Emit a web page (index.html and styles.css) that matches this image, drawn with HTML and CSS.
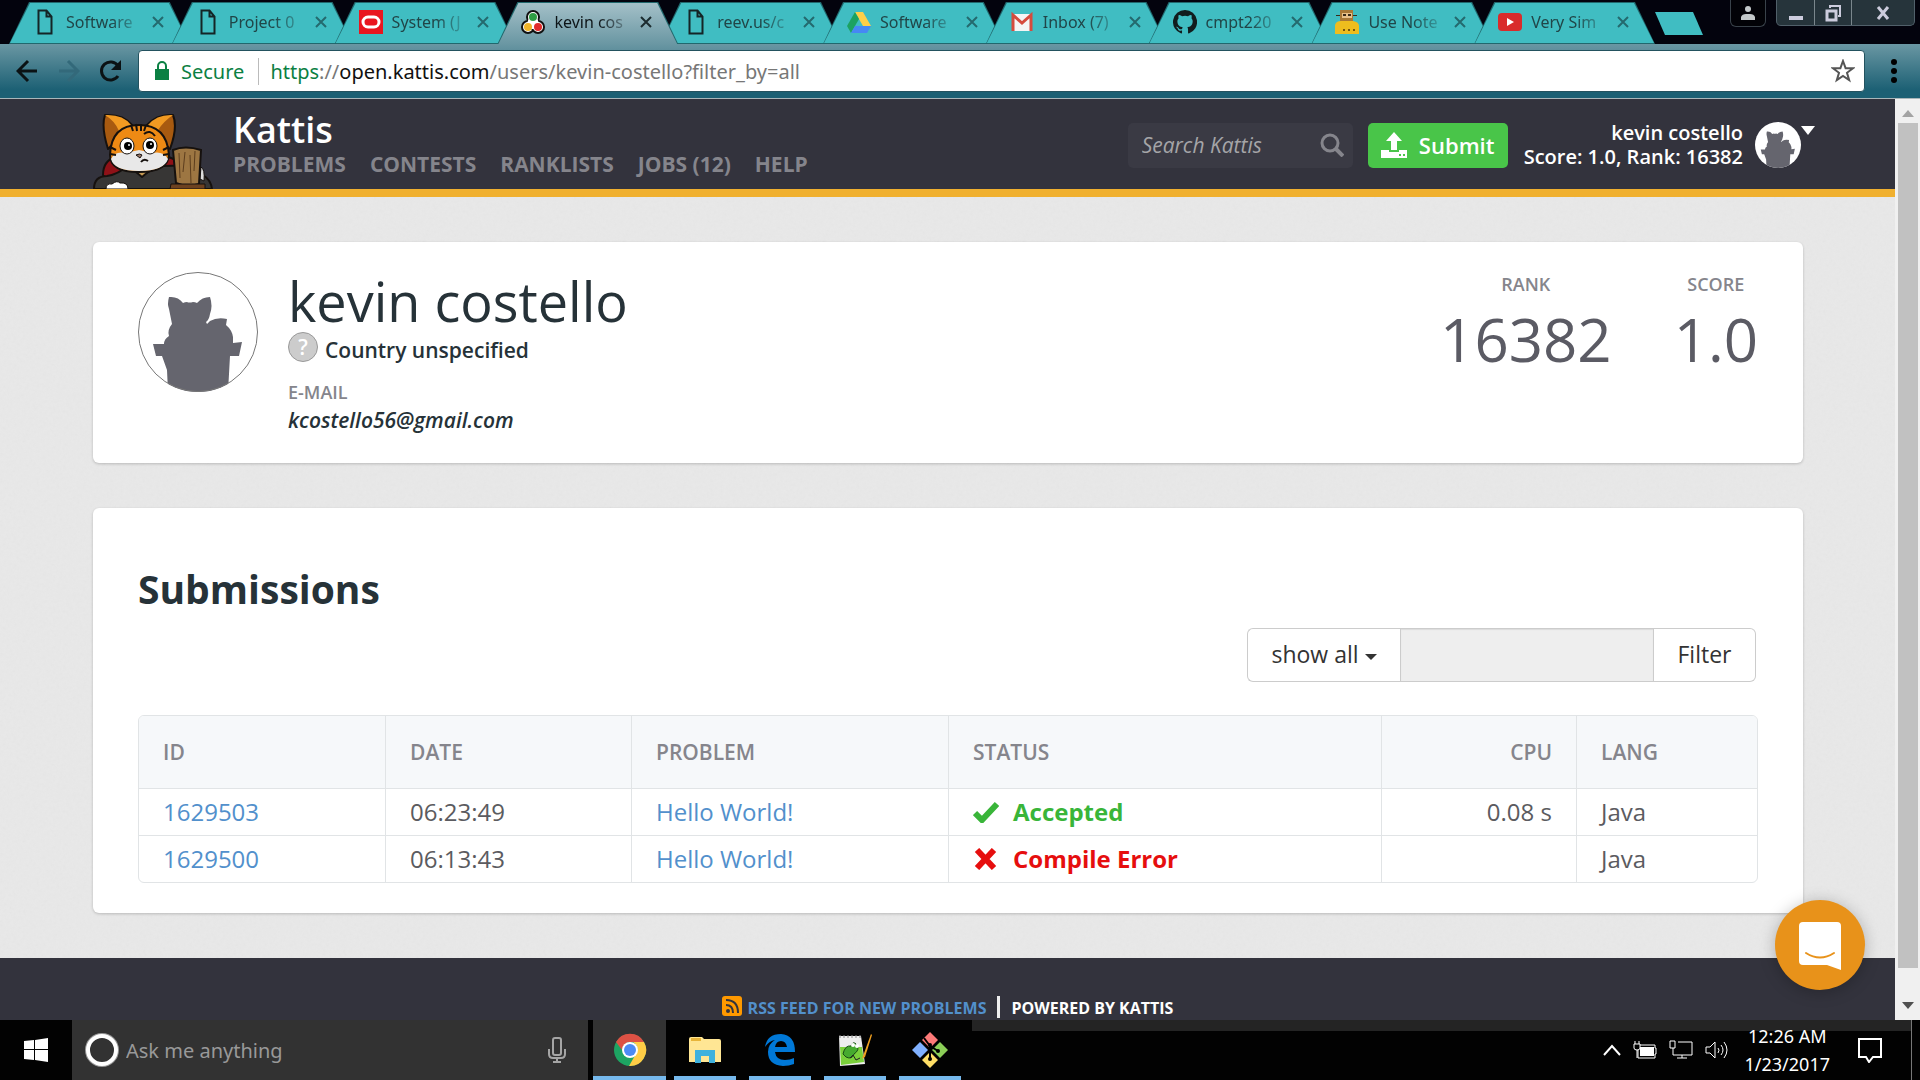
FILE: index.html
```html
<!DOCTYPE html>
<html lang="en">
<head>
<meta charset="utf-8">
<title>kevin costello – Kattis, Kattis</title>
<link rel="stylesheet" href="styles.css">
</head>
<body>
<svg class="defs" aria-hidden="true">
  <symbol id="page" viewBox="0 0 16 26"><path d="M1.500 1.500h8l5 6v17h-13zM9.500 1.500v6h5" fill="none" stroke="#142526" stroke-width="2"/></symbol>
  <symbol id="close" viewBox="0 0 12 12"><path d="M1 1l10 10M11 1L1 11" fill="none" stroke="currentColor" stroke-width="2"/></symbol>
  <symbol id="cat" viewBox="0 0 120 120"><clipPath id="disc"><circle cx="60" cy="60" r="60"/></clipPath><path clip-path="url(#disc)" d="M31 25q9-1 14 6 2-1 4-1 2 1 6 0 2 0 4 1 5-6 13-6 3 9 0 17-1 6-4 8l1 2 3-3q7-4 17-2l-1 6q6 5 7 12v6l9-1-3 14h-9l-2 36H30l-1-22-5-14h-6l-3-12h11q0-5 5-8-2-6 3-12l-3-15q-2-5 0-12z" fill="#65656e"/></symbol>
</svg>

<header class="browser">
  <div class="strip">
    <nav class="tabs">
      <a class="tab" href="#"><svg class="fav"><use href="#page"/></svg><span>Software</span><svg class="x"><use href="#close"/></svg></a>
      <a class="tab" href="#"><svg class="fav"><use href="#page"/></svg><span>Project 0</span><svg class="x"><use href="#close"/></svg></a>
      <a class="tab" href="#"><svg class="fav" viewBox="0 0 24 24"><path d="M0 0h24v24H0z" fill="#e9161f"/><rect x="4" y="7" width="16" height="10" rx="5" fill="none" stroke="#fff" stroke-width="3"/></svg><span>System (J</span><svg class="x"><use href="#close"/></svg></a>
      <a class="tab active" href="#"><svg class="fav" viewBox="0 0 24 24"><g fill="#fff" stroke="#111" stroke-width="2"><circle cx="12" cy="7" r="6"/><circle cx="7" cy="17" r="6"/><circle cx="17" cy="17" r="6"/></g><path d="M9 5h6l5 14H4z" fill="#fff"/><circle cx="12" cy="7" r="4" fill="#2f9e44"/><circle cx="7" cy="17" r="4" fill="#f0b429"/><circle cx="17" cy="17" r="4" fill="#e02b2b"/></svg><span>kevin cos</span><svg class="x"><use href="#close"/></svg></a>
      <a class="tab" href="#"><svg class="fav"><use href="#page"/></svg><span>reev.us/c</span><svg class="x"><use href="#close"/></svg></a>
      <a class="tab" href="#"><svg class="fav" viewBox="0 0 24 24"><path d="M8 2h8l8 14h-8z" fill="#ffcf48"/><path d="M8 2l4 7-8 14-4-7z" fill="#1ca261"/><path d="M8 16h16l-4 7H4z" fill="#4688f4"/></svg><span>Software</span><svg class="x"><use href="#close"/></svg></a>
      <a class="tab" href="#"><svg class="fav" viewBox="0 0 24 24"><path d="M2 4h20v17H2z" fill="#f5f5f5"/><path d="M3 21V5l9 8 9-8v16" fill="none" stroke="#d54b3d" stroke-width="3"/></svg><span>Inbox (7)</span><svg class="x"><use href="#close"/></svg></a>
      <a class="tab" href="#"><svg class="fav" viewBox="0 0 16 16"><path fill="#111d1e" d="M8 0a8 8 0 0 0-2.530 15.590c.4.070.55-.17.55-.38v-1.490c-2.010.37-2.530-.49-2.690-.94-.09-.23-.48-.94-.82-1.130-.28-.15-.68-.52-.01-.53.63-.01 1.080.58 1.230.82.720 1.210 1.870.87 2.330.66.070-.52.280-.87.510-1.070-1.780-.2-3.640-.89-3.640-3.950 0-.87.310-1.590.82-2.150-.08-.2-.36-1.020.08-2.120 0 0 .67-.21 2.200.82a7.600 7.600 0 0 1 4 0c1.530-1.040 2.200-.82 2.200-.82.440 1.100.160 1.920.08 2.120.51.560.82 1.270.82 2.150 0 3.070-1.870 3.750-3.650 3.950.29.250.54.730.54 1.480v2.200c0 .21.150.46.550.38A8 8 0 0 0 8 0z"/></svg><span>cmpt220</span><svg class="x"><use href="#close"/></svg></a>
      <a class="tab" href="#"><svg class="fav" viewBox="0 0 24 24"><path d="M5 0h13v11H5z" fill="#a87736"/><path d="M7 3h10v5H7z" fill="#e8c08a"/><path d="M8 4h3v2H8zM13 4h3v2h-3zM1 5h4v1H1zM18 5h4v1h-4z" fill="#3a2a18"/><path d="M0 24V15q1-4 6-4h12q6 1 6 5v8z" fill="#eebd1e"/><path d="M8 19h2v2H8zM13 19h2v2h-2zM18 19h2v2h-2z" fill="#76560d"/></svg><span>Use Note</span><svg class="x"><use href="#close"/></svg></a>
      <a class="tab" href="#"><svg class="fav" viewBox="0 0 24 24"><rect y="3" width="24" height="18" rx="4" fill="#d92b2b"/><path d="M9 8l7 4-7 4z" fill="#fff"/></svg><span>Very Sim</span><svg class="x"><use href="#close"/></svg></a>
    </nav>
    <button class="newtab" aria-label="New tab"></button>
    <div class="spacer"></div>
    <button class="profile" aria-label="Profile"><svg width="14" height="16" viewBox="0 0 14 16" fill="#c3c8ca"><circle cx="7" cy="4" r="3"/><path d="M0 15v-3q1-3 5-3h4q4 0 5 3v3z"/></svg></button>
    <div class="winbtns">
      <button aria-label="Minimize"><svg width="18" height="20" viewBox="0 0 18 20"><path d="M2 13h14v4H2z" fill="#ccd"/></svg></button>
      <button aria-label="Restore"><svg width="18" height="20" viewBox="0 0 18 20" fill="none" stroke="#ccd" stroke-width="2"><path d="M6 5V3h10v10h-2"/><path d="M3 8h9v9H3z" stroke-width="3"/></svg></button>
      <button class="wide" aria-label="Close"><svg width="16" height="18" viewBox="0 0 16 18"><path d="M3 3l10 12M13 3L3 15" stroke="#ccd" stroke-width="3"/></svg></button>
    </div>
  </div>
  <div class="toolbar">
    <button aria-label="Back"><svg width="22" height="26" viewBox="0 0 22 26"><path d="M21 13H2M12 3L2 13l10 10" fill="none" stroke="#0b1214" stroke-width="3"/></svg></button>
    <button aria-label="Forward"><svg width="22" height="26" viewBox="0 0 22 26"><path d="M1 13h19M10 3l10 10-10 10" fill="none" stroke="#33697a" stroke-width="3"/></svg></button>
    <button aria-label="Reload"><svg width="22" height="26" viewBox="0 0 22 26"><path d="M18 18a9 9 0 1 1 0-10" fill="none" stroke="#0b1214" stroke-width="3"/><path d="M21 2v10H11z" fill="#0b1214"/></svg></button>
    <div class="omnibox">
      <svg width="14" height="20" viewBox="0 0 14 20"><path d="M0 8h14v11H0z" fill="#0b8043"/><path d="M3 9V5a4 4 0 0 1 8 0v4" fill="none" stroke="#0b8043" stroke-width="2"/></svg>
      <span class="secure">Secure</span>
      <span class="url"><span class="scheme">https</span>://<b>open.kattis.com</b>/users/kevin-costello?filter_by=all</span>
      <svg width="24" height="24" viewBox="0 0 24 24"><path d="M12 2l2.600 7.200H22l-6 4.600 2.200 7.400L12 17l-6.200 4.200L8 13.800 2 9.200h7.400z" fill="none" stroke="#555" stroke-width="2"/></svg>
    </div>
    <button aria-label="Menu"><svg width="6" height="26" viewBox="0 0 6 26"><circle cx="3" cy="4" r="3"/><circle cx="3" cy="13" r="3"/><circle cx="3" cy="22" r="3"/></svg></button>
  </div>
</header>

<div class="viewport">
  <div class="site">
    <div class="topbar">
      <svg class="mascot" viewBox="0 0 120 76" width="120" height="76">
        <g stroke="#16110e" stroke-width="2" stroke-linejoin="round">
        <path d="M22 44q-12 4-12 18l8 11h60l10-24-20-8z" fill="#8f1117"/>
        <path d="M1 76q0-13 13-13 12-2 20-10l16 8 20-8q34-2 40 9 8 5 9 14z" fill="#373635"/>
        <path d="M43 59l6 5 6-5" fill="#c69a54"/>
        <path d="M108 54q4 2 3 14l-4-2z" fill="#ddd" stroke-width="1"/>
        <path d="M15 36Q8 14 12 2q18-1 27 10L19 32z" fill="#a85a10"/>
        <path d="M77 36Q85 14 80 2 64 1 54 12l18 21z" fill="#a85a10"/>
        <path d="M12 2q18-1 26 10L26 18Q22 8 12 2zM80 2Q64 1 55 12l10 5q6-9 15-15z" fill="#f29a22" stroke="none"/>
        <path d="M17 42Q18 12 46 12t30 30q-1 17-30 17T17 42z" fill="#ee8a14"/>
        <path d="M18 46q4-8 14-6l14-3 14 3q10-2 15 6-4 12-29 12T18 46z" fill="#e8e8e8" stroke="none"/>
        </g>
        <path d="M38 12l2 6M43 11l1 7M48 11v7M53 12l-2 6M17 34l6 3M17 41l6 1M76 34l-6 3M76 41l-6 1M51 21q6-5 11 2" stroke="#16110e" stroke-width="2" fill="none"/>
        <g fill="#fff" stroke="#16110e"><ellipse cx="34" cy="33" rx="7" ry="8"/><ellipse cx="57" cy="33" rx="7" ry="8"/></g>
        <circle cx="35" cy="33" r="4"/><circle cx="57" cy="32" r="4"/><circle cx="36" cy="32" r="1" fill="#fff"/><circle cx="58" cy="31" r="1" fill="#fff"/>
        <path d="M43 42q4-2 6 0l-2 3z" fill="#9a786a" stroke="#16110e"/>
        <path d="M48 49q3-4 7-1" fill="none" stroke="#16110e" stroke-width="2"/>
        <path d="M80 37q12-5 28 0l-2 34q-12 4-23-1z" fill="#9d7642" stroke="#16110e" stroke-width="2"/>
        <path d="M86 40l1 25M92 39l-2 20M97 42l1 28M102 38l-1 20" stroke="#5c3d1d"/>
        <path d="M78 71h34v5H77z" fill="#6d4220" stroke="#16110e"/>
        <path d="M13 76q0-6 6-5 5-4 8-1 8-1 8 6z" fill="#fff" stroke="#16110e"/>
      </svg>
      <div class="brand">
        <a class="name" href="#">Kattis</a>
        <nav class="menu-links"><a href="#">PROBLEMS</a><a href="#">CONTESTS</a><a href="#">RANKLISTS</a><a href="#">JOBS (12)</a><a href="#">HELP</a></nav>
      </div>
      <div class="search"><input type="text" placeholder="Search Kattis" aria-label="Search Kattis"><svg width="24" height="24" viewBox="0 0 24 24"><path d="M16 16l7 7" stroke="#85858c" stroke-width="4"/><circle cx="10" cy="10" r="8" fill="none" stroke="#85858c" stroke-width="3"/></svg></div>
      <button class="submit"><svg width="26" height="26" viewBox="0 0 26 26" fill="#fff"><path d="M13 0l8 9h-5v9h-6V9H5z"/><path d="M0 18h8v2h10v-2h8v8H0z"/><path d="M18 22h2v2h-2zM22 22h2v2h-2z" fill="#49c549"/></svg>Submit</button>
      <div class="user"><div>kevin costello</div><div>Score: 1.0, Rank: 16382</div></div>
      <svg class="mini" viewBox="0 0 120 120"><circle cx="60" cy="60" r="60" fill="#fff"/><use href="#cat"/></svg>
      <svg class="caret" width="14" height="9" viewBox="0 0 14 9"><path d="M0 0h14L7 9z" fill="#fff"/></svg>
    </div>

    <main>
      <section class="card profile-card">
        <svg class="avatar" viewBox="0 0 120 120"><use href="#cat"/><circle cx="60" cy="60" r="59.500" fill="none" stroke="#777" /></svg>
        <div class="info">
          <h1>kevin costello</h1>
          <div class="country"><span class="q">?</span>Country unspecified</div>
          <div class="label">E-MAIL</div>
          <div class="mail">kcostello56@gmail.com</div>
        </div>
        <dl class="stats">
          <div><dt>RANK</dt><dd>16382</dd></div>
          <div><dt>SCORE</dt><dd>1.0</dd></div>
        </dl>
      </section>

      <section class="card subs">
        <h2>Submissions</h2>
        <div class="filter">
          <button class="show">show all<i></i></button><input type="text" aria-label="Filter value" disabled><button class="go">Filter</button>
        </div>
        <table>
          <colgroup><col class="c1"><col class="c2"><col class="c3"><col class="c4"><col class="c5"><col class="c6"></colgroup>
          <thead><tr><th>ID</th><th>DATE</th><th>PROBLEM</th><th>STATUS</th><th class="r">CPU</th><th>LANG</th></tr></thead>
          <tbody>
            <tr><td><a href="#">1629503</a></td><td>06:23:49</td><td><a href="#">Hello World!</a></td><td class="ok"><svg viewBox="0 0 26 22"><path d="M2 12l7 7L24 3" fill="none" stroke="#39b539" stroke-width="6"/></svg>Accepted</td><td class="r">0.08 s</td><td>Java</td></tr>
            <tr><td><a href="#">1629500</a></td><td>06:13:43</td><td><a href="#">Hello World!</a></td><td class="bad"><svg viewBox="0 0 26 22"><path d="M4 2l17 18M21 2L4 20" fill="none" stroke="#e60e0e" stroke-width="6"/></svg>Compile Error</td><td></td><td>Java</td></tr>
          </tbody>
        </table>
      </section>
    </main>

    <footer>
      <svg width="20" height="20" viewBox="0 0 20 20"><rect width="20" height="20" rx="3" fill="#f90"/><circle cx="6" cy="15" r="2" fill="#33333d"/><path d="M4 9q7 0 7 8M4 4q12 0 12 13" fill="none" stroke="#33333d" stroke-width="2"/></svg>
      <a href="#">RSS FEED FOR NEW PROBLEMS</a><span class="bar"></span><span>POWERED BY KATTIS</span>
    </footer>
  </div>
  <div class="scroll"><svg width="12" height="8"><path d="M0 8l6-7 6 7z" fill="#a3a3a3"/></svg><div class="thumb"></div><svg width="12" height="8"><path d="M0 0h12L6 7z" fill="#505050"/></svg></div>
  <button class="chat" aria-label="Open chat"><svg width="42" height="48" viewBox="0 0 42 48"><path d="M4 0h34q4 0 4 4v44l-14-5H4q-4 0-4-4V4q0-4 4-4z" fill="#fff"/><path d="M7 31q14 9 28 0" fill="none" stroke="#e8921a" stroke-width="2" stroke-linecap="round"/></svg></button>
</div>

<div class="taskbar">
  <button class="start" aria-label="Start"><svg width="24" height="24" viewBox="0 0 24 24" fill="#fff"><path d="M0 3l10-1v9H0zM11 2l13-2v11H11zM0 12h10v10L0 21zM11 12h13v12l-13-2z"/></svg></button>
  <label class="cortana"><svg width="36" height="36" viewBox="0 0 36 36" fill="none"><circle cx="18" cy="18" r="16" stroke="#999" stroke-width="2"/><circle cx="18" cy="18" r="14" stroke="#fff" stroke-width="4"/></svg><input type="text" placeholder="Ask me anything" aria-label="Search Windows"><svg width="18" height="26" viewBox="0 0 18 26" fill="none" stroke="#a5a5a5" stroke-width="2"><rect x="5" y="1" width="8" height="17" rx="2"/><path d="M1 12v5q0 4 4 4h8q4 0 4-4v-5M9 21v4M5 25h8"/></svg></label>
  <button class="app on" aria-label="Chrome"><svg width="34" height="34" viewBox="0 0 34 34"><circle cx="17" cy="17" r="16" fill="#1da462"/><path d="M3 9A16 16 0 0 1 31 9H17q-6 0-8 8z" fill="#dd5144"/><path d="M31 9A16 16 0 0 1 16 33l8-14q2-6-4-10z" fill="#ffcd46"/><circle cx="17" cy="17" r="8" fill="#fff"/><circle cx="17" cy="17" r="6" fill="#4c8bf5"/></svg></button>
  <button class="app" aria-label="File Explorer"><svg width="34" height="34" viewBox="0 0 34 34"><path d="M1 6q0-2 2-2h11l2 2h15q2 0 2 2v21H1z" fill="#ffe694"/><path d="M3 5h10v3H3z" fill="#e8b53a"/><path d="M7 30V17h20v13h-6v-7h-8v7z" fill="#3fb1dd"/></svg></button>
  <button class="app" aria-label="Edge"><svg width="34" height="34" viewBox="0 0 34 34"><path d="M2 14Q4 1 18 1q14 1 14 18H12q1 8 10 8 5 0 9-2v6q-5 2-11 2Q5 32 5 19q0-8 7-12Q6 8 2 14zm10 0h12q-1-6-6-6t-6 6z" fill="#0078d7" fill-rule="evenodd"/></svg></button>
  <button class="app" aria-label="Notepad++"><svg width="34" height="34" viewBox="0 0 34 34"><path d="M1 3h22l4 28-25 2z" fill="#eee"/><path d="M2 14h22l2 15-23 3z" fill="#7ad03a"/><path d="M2 2v3M6 2v3M10 2v3M14 2v3M18 2v3M22 2v3" stroke="#888"/><path d="M5 21q2-9 8-8 2-6 6-1 3 5-3 9-2 6-8 3z" fill="#46aa2f" stroke="#184b15"/><circle cx="15" cy="12" r="2" fill="#fff"/><circle cx="19" cy="13" r="2" fill="#fff"/><path d="M12 25l3-3 3 5 4-2" fill="none" stroke="#222"/><path d="M33 1l-8 22-1 3 3-2 7-22z" fill="#f0a020"/></svg></button>
  <button class="app" aria-label="Git Bash"><svg width="36" height="36" viewBox="0 0 36 36"><path d="M18 0l8 8-8 8-8-8z" fill="#fd7a78"/><path d="M28 10l8 8-8 8-8-8z" fill="#8ccf58"/><path d="M8 10l8 8-8 8-8-8z" fill="#80b0ff"/><path d="M18 20l8 8-8 8-8-8z" fill="#ffde66"/><path d="M12 6l6 8v13M18 14l8 5" fill="none" stroke="#000" stroke-width="2"/><circle cx="18" cy="13" r="2"/><circle cx="18" cy="27" r="2"/><circle cx="26" cy="19" r="2"/></svg></button>
  <div class="tray">
    <svg width="18" height="12" fill="none" stroke="#fff" stroke-width="2"><path d="M1 11l8-9 8 9"/></svg>
    <svg width="24" height="18" viewBox="0 0 24 18"><path d="M5 4h17v3h1v6h-1v4H5z" fill="none" stroke="#fff"/><path d="M7 6h14v9H7z" fill="#fff"/><path d="M2 0v3M6 0v3M1 3h6v4q0 2-3 2t-3-2zM4 9v8" fill="#000" stroke="#fff"/></svg>
    <svg width="24" height="20" fill="none" stroke="#fff"><path d="M9 2h14v13H4V8M1 1h5v7H1zM13 15v3M8 18h10" stroke-width="1"/></svg>
    <svg width="24" height="20" fill="none" stroke="#fff"><path d="M1 7h4l5-5v16l-5-5H1zM13 8q2 2 0 5M16 5q4 5 0 10M19 2q6 8 0 16" stroke-width="1"/></svg>
    <div class="clock"><div>12:26 AM</div><div>1/23/2017</div></div>
    <svg width="24" height="26" fill="none" stroke="#fff" stroke-width="2"><path d="M1 2h22v18h-8l-4 5-3-5H1z"/></svg>
  </div>
</div>
</body>
</html>
```
FILE: styles.css
```css
* { box-sizing: border-box; }
body { margin: 0; min-height: 100vh; display: flex; flex-direction: column; font-family: "Open Sans", "Noto Sans", sans-serif; color: #263238; }
a { color: #5290cc; text-decoration: none; }
button { border: 0; padding: 0; background: none; font: inherit; color: inherit; display: flex; align-items: center; justify-content: center; }
input { border: 0; outline: 0; background: none; font: inherit; min-width: 0; }
svg { flex: none; display: block; }
.defs { position: absolute; width: 0; height: 0; }

/* browser chrome */
.browser { background: linear-gradient(#6a97a3 44px, #1c6074 90px); border-bottom: 1px solid #a9b6ba; font-family: "Noto Sans", "Open Sans", sans-serif; }
.strip { display: flex; align-items: flex-start; height: 44px; padding: 0 5px 0 9px; background: #03030d; }
.tabs { display: flex; flex: 0 1 1646px; height: 44px; padding: 2px 18px 0 0; min-width: 0; }
.tab { position: relative; z-index: 0; flex: 1 1 0; margin-right: -18px; padding: 0 26px 2px 24px; display: flex; align-items: center; color: #204648; font-size: 16px; min-width: 0; --fill: #40bdc2; }
.tab::before, .tab::after { content: ""; position: absolute; inset: 0; z-index: -1; background: #21686d; clip-path: polygon(20px 0, calc(100% - 20px) 0, 100% 100%, 0 100%); }
.tab::after { inset: 1px; background: var(--fill); }
.tab.active { z-index: 1; color: #0d1518; --fill: linear-gradient(#a4c0c8, #6a97a3); }
.tab.active::after { bottom: 0; }
.tab span { flex: 1; margin-left: 9px; white-space: nowrap; -webkit-mask-image: linear-gradient(90deg, #000 60%, rgba(0, 0, 0, .2)); mask-image: linear-gradient(90deg, #000 60%, rgba(0, 0, 0, .2)); }
.fav { width: 24px; height: 26px; }
.x { width: 12px; height: 12px; margin-left: 12px; color: #246a6e; }
.active .x { color: #1c2c30; }
.newtab { width: 48px; height: 23px; margin-top: 12px; background: #40bdc2; clip-path: polygon(0 0, 38px 0, 100% 100%, 10px 100%); }
.spacer { flex: 1; }
.profile { width: 36px; height: 27px; border: 1px solid #39424a; border-top: 0; border-radius: 0 0 6px 6px; background: #020207; margin-right: 10px; }
.winbtns { display: flex; height: 26px; border: 1px solid #51606a; border-top: 0; border-radius: 0 0 5px 5px; background: #26343b; }
.winbtns button { width: 37px; }
.winbtns button + button { border-left: 1px solid #7a868c; }
.winbtns .wide { width: 63px; }
.toolbar { display: flex; align-items: center; height: 54px; padding: 0 23px 0 16px; gap: 20px; }
.omnibox { flex: 1; display: flex; align-items: center; height: 42px; margin: 0 6px 0 -4px; padding: 0 9px 0 16px; background: #fff; border: 1px solid #23525f; border-radius: 4px; font-size: 20px; white-space: nowrap; }
.secure { color: #0b8043; margin-left: 12px; padding-right: 14px; border-right: 1px solid #bbb; }
.url { flex: 1; margin-left: 11px; color: #777; }
.url b { font-weight: 400; color: #111; }
.scheme { color: #0b8043; }

/* page */
.viewport { position: relative; flex: 1; display: flex; }
.site { flex: 1; display: flex; flex-direction: column; background: #e8e8e8; }
.topbar { display: flex; align-items: center; height: 98px; padding: 2px 80px 0 93px; background: #33333d; border-bottom: 8px solid #f0b02f; color: #fff; }
.mascot { align-self: flex-end; }
.brand { flex: 1; margin-left: 20px; }
.name { display: block; color: #fff; font-size: 36px; line-height: 38px; font-weight: 600; }
.menu-links { display: flex; gap: 24px; font-size: 21px; line-height: 30px; font-weight: 700; white-space: nowrap; }
.menu-links a { color: #85858c; }
.search { display: flex; align-items: center; width: 225px; height: 45px; padding: 0 9px 0 12px; border-radius: 5px; background: #3a3a44; }
.search input { flex: 1; font-size: 21px; font-style: italic; color: #aaa; }
.search input::placeholder { color: #a5a5a8; }
.submit { width: 140px; height: 45px; margin-left: 15px; gap: 12px; border-radius: 5px; background: #49c549; font-size: 22px; font-weight: 600; }
.user { margin-left: 16px; font-size: 20px; line-height: 24px; font-weight: 600; text-align: right; white-space: nowrap; }
.mini { width: 46px; height: 46px; margin-left: 12px; }
.caret { margin-bottom: 30px; }
main { flex: 1; padding: 45px 92px 45px 93px; display: flex; flex-direction: column; gap: 45px; background-image: url("data:image/svg+xml,%3Csvg xmlns='http://www.w3.org/2000/svg' width='200' height='200'%3E%3Cfilter id='n'%3E%3CfeTurbulence type='fractalNoise' baseFrequency='.3' numOctaves='2' stitchTiles='stitch'/%3E%3CfeColorMatrix type='saturate' values='0'/%3E%3C/filter%3E%3Crect width='200' height='200' filter='url(%23n)' opacity='.05'/%3E%3C/svg%3E"); }
.card { background: #fff; border-radius: 6px; box-shadow: 0 1px 3px rgba(0, 0, 0, .2); }
.profile-card { display: flex; height: 221px; padding: 30px 45px; }
.avatar { width: 120px; height: 120px; }
.info { flex: 1; margin-left: 30px; font-weight: 600; }
h1 { margin: 0; font-size: 54px; line-height: 58px; font-weight: 400; }
.country { display: flex; font-size: 21px; line-height: 40px; gap: 7px; }
.q { width: 30px; height: 30px; margin-top: 2px; border: 1px solid #999; border-radius: 50%; background: #ccc; color: #fff; line-height: 28px; text-align: center; }
.label, dt { color: #85858c; font-size: 18px; line-height: 24px; font-weight: 600; }
.label { margin-top: 10px; }
.mail { font-size: 21px; line-height: 32px; font-style: italic; }
.stats { display: flex; margin: 0; gap: 62px; text-align: center; }
dd { margin: 0; font-size: 60px; line-height: 86px; color: #5b5b64; }
.subs { padding: 56px 45px 30px; }
h2 { margin: 0; font-size: 39px; line-height: 50px; font-weight: 700; }
.filter { display: flex; justify-content: flex-end; height: 54px; margin: 14px 2px 33px 0; font-size: 23px; color: #333; }
.filter > * { border: 1px solid #ccc; padding-bottom: 2px; }
.show { width: 153px; border-right: 0; border-radius: 6px 0 0 6px; gap: 6px; }
.show i { border: 6px solid transparent; border-top-color: #333; border-bottom: 0; margin-top: 6px; }
.filter input { width: 254px; background: #eee; box-shadow: inset 0 1px 1px rgba(0, 0, 0, .08); }
.go { width: 102px; border-left: 0; border-radius: 0 6px 6px 0; }
table { width: 100%; table-layout: fixed; border-collapse: separate; border-spacing: 0; border: 1px solid #e1e4e6; border-radius: 6px; font-size: 24px; line-height: 32px; color: #5b5b60; overflow: hidden; }
.c1, .c2 { width: 246px; }
.c3 { width: 317px; }
.c4 { width: 433px; }
.c5 { width: 195px; }
th { height: 72px; background: #f6f8fa; color: #85858c; font-size: 21px; font-weight: 600; text-align: left; }
th, td { padding: 0 24px; border-left: 1px solid #e1e4e6; }
th:first-child, td:first-child { border-left: 0; }
td { height: 47px; border-top: 1px solid #e1e4e6; }
.r { text-align: right; }
.ok, .bad { font-weight: 700; }
.ok { color: #39b539; }
.bad { color: #e60e0e; }
td svg { display: inline-block; width: 26px; height: 22px; margin-right: 14px; vertical-align: -2px; }
footer { display: flex; align-items: flex-end; justify-content: center; height: 62px; padding-bottom: 2px; background: #33333d; color: #fff; font-size: 16px; line-height: 20px; font-weight: 700; }
footer svg { margin: 0 6px 2px 0; }
.bar { width: 3px; height: 22px; margin: 0 11px; background: #eee; }
.scroll { width: 25px; display: flex; flex-direction: column; align-items: center; padding: 10px 0; gap: 6px; background: #f0f0f0; }
.thumb { width: 20px; flex: 1; margin-bottom: 28px; background: #c1c1c1; }
.chat { position: absolute; right: 55px; bottom: 30px; width: 90px; height: 90px; padding-top: 2px; border-radius: 50%; background: #e8921a; box-shadow: 0 2px 16px rgba(0, 0, 0, .25); }

/* taskbar */
.taskbar { display: flex; height: 60px; background: #020202; color: #fff; font-family: "Noto Sans", "Open Sans", sans-serif; }
.start { width: 72px; }
.cortana { display: flex; align-items: center; width: 516px; padding: 0 22px 0 12px; background: #323232; }
.cortana input { flex: 1; padding: 0 0 0 6px; font-size: 20px; color: #999; }
.cortana input::placeholder { color: #999; }
.app { width: 62px; height: 60px; margin: 0 6px 0 7px; padding-top: 4px; border-bottom: 4px solid #76b9ed; }
.app.on { width: 73px; background: #333; margin: 0 1px 0 5px; }
.tray { flex: 1; display: flex; align-items: center; justify-content: flex-end; gap: 12px; margin-left: 5px; padding-right: 29px; border-right: 1px solid #777; margin-right: 8px; background: linear-gradient(#242424 11px, transparent 11px); }
.clock { margin: 0 16px 0 4px; font-size: 18px; line-height: 28px; text-align: center; }
```
